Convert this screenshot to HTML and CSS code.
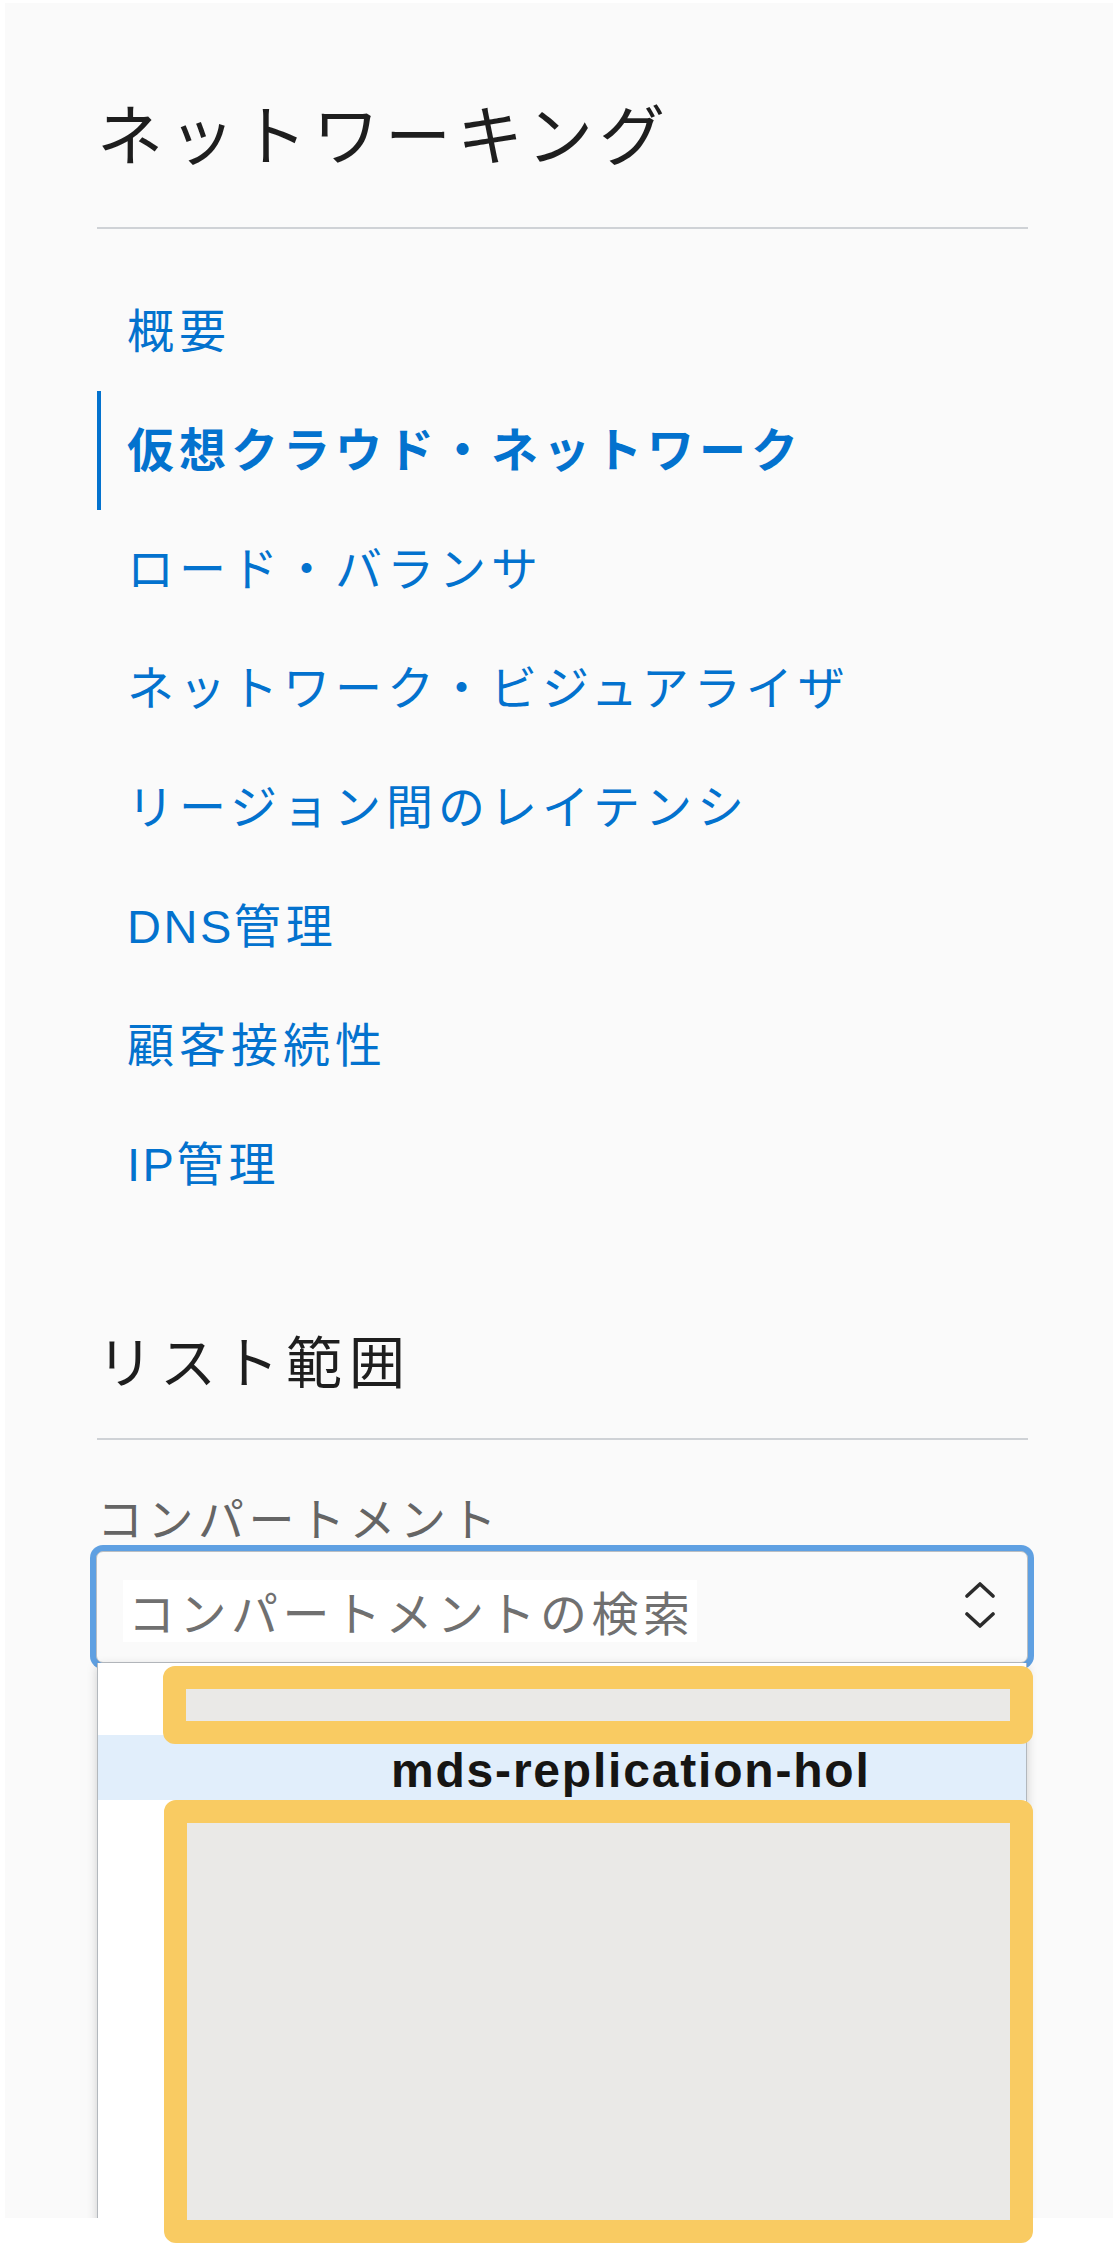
FILE: index.html
```html
<!DOCTYPE html>
<html lang="ja">
<head>
<meta charset="utf-8">
<title>ネットワーキング</title>
<link rel="stylesheet" href="styles.css">
</head>
<body>
<div class="page">
  <div class="panel">
    <h1 class="title">ネットワーキング</h1>
    <hr class="rule rule-title">
    <nav class="nav">
      <a class="nav-item" href="#">概要</a>
      <a class="nav-item active" href="#">仮想クラウド・ネットワーク</a>
      <a class="nav-item" href="#">ロード・バランサ</a>
      <a class="nav-item" href="#">ネットワーク・ビジュアライザ</a>
      <a class="nav-item" href="#">リージョン間のレイテンシ</a>
      <a class="nav-item" href="#"><span class="latin">DNS</span>管理</a>
      <a class="nav-item" href="#">顧客接続性</a>
      <a class="nav-item" href="#"><span class="latin">IP</span>管理</a>
    </nav>
    <h2 class="section-title">リスト範囲</h2>
    <hr class="rule rule-section">
    <label class="field-label">コンパートメント</label>
    <div class="select">
      <span class="placeholder">コンパートメントの検索</span>
      <svg class="chevrons" viewBox="0 0 30 46" width="30" height="46" aria-hidden="true">
        <polyline points="2,14 15,2 28,14" fill="none" stroke="#2b2b2b" stroke-width="3.6" stroke-linecap="round" stroke-linejoin="round"/>
        <polyline points="2,32 15,44 28,32" fill="none" stroke="#2b2b2b" stroke-width="3.6" stroke-linecap="round" stroke-linejoin="round"/>
      </svg>
    </div>
    <ul class="dropdown">
      <li class="option option-first"></li>
      <li class="option option-selected">mds-replication-hol</li>
      <li class="option option-rest"></li>
    </ul>
  </div>
  <div class="redact redact-1"></div>
  <div class="redact redact-2"></div>
</div>
</body>
</html>
```

FILE: styles.css
```css
html, body {
  margin: 0;
  padding: 0;
  background: #ffffff;
}

.page {
  position: relative;
  width: 1113px;
  height: 2245px;
  padding: 3px 0 0 5px;
  box-sizing: border-box;
  overflow: hidden;
  font-family: "Liberation Sans", "Noto Sans CJK JP", sans-serif;
}

.panel {
  height: 2215px;
  background: #fafafa;
  padding: 88px 85px 0 92px;
  box-sizing: border-box;
  overflow: hidden;
}

.title {
  margin: 0;
  font-family: "Noto Sans CJK JP", sans-serif;
  font-size: 66px;
  line-height: 80px;
  font-weight: 400;
  letter-spacing: 6px;
  color: #1e1e1e;
  white-space: nowrap;
}

.rule {
  border: 0;
  height: 2px;
  background: #cfd2d6;
  margin: 0;
}

.rule-title {
  margin-top: 56px;
}

.rule-section {
  margin-top: 44px;
}

.nav {
  display: flex;
  flex-direction: column;
  margin-top: 43px;
}

.nav-item {
  display: block;
  height: 119px;
  line-height: 119px;
  padding-left: 30px;
  font-size: 47px;
  letter-spacing: 5px;
  color: #0372ce;
  text-decoration: none;
  white-space: nowrap;
}

.nav-item .latin {
  letter-spacing: 2.5px;
}

.nav-item.active {
  border-left: 4px solid #0372ce;
  padding-left: 26px;
  font-weight: 700;
}

.section-title {
  margin: 100px 0 0;
  font-family: "Noto Sans CJK JP", sans-serif;
  font-size: 56px;
  line-height: 70px;
  font-weight: 400;
  letter-spacing: 7px;
  color: #1e1e1e;
  white-space: nowrap;
}

.field-label {
  display: block;
  margin-top: 51px;
  font-family: "Noto Sans CJK JP", sans-serif;
  font-size: 46px;
  line-height: 50px;
  letter-spacing: 4.5px;
  color: #656565;
  white-space: nowrap;
}

.select {
  display: flex;
  align-items: center;
  margin: 10px 0 0 -1px;
  width: calc(100% + 1px);
  height: 112px;
  padding: 8px 32px 0 26px;
  box-sizing: border-box;
  border: 1px solid #b9bec3;
  border-radius: 7px;
  background: #fafafa;
  box-shadow: 0 0 0 6px #5fa0e2;
}

.placeholder {
  display: inline-block;
  background: #ffffff;
  line-height: 62px;
  padding: 0 2px 0 5px;
  font-family: "Noto Sans CJK JP", sans-serif;
  font-size: 47px;
  letter-spacing: 4.5px;
  color: #707070;
  white-space: nowrap;
}

.chevrons {
  margin-left: auto;
  margin-top: -13px;
  flex: none;
}

.dropdown {
  list-style: none;
  margin: 0 1px 0 0;
  padding: 0;
  background: #ffffff;
  border-left: 1px solid #b3b8bd;
  border-right: 1px solid #b3b8bd;
  box-shadow: 0 3px 10px rgba(0, 0, 0, 0.18);
}

.option {
  box-sizing: border-box;
}

.option-first {
  height: 72px;
}

.option-selected {
  height: 65px;
  padding: 6px 0 0 293px;
  line-height: 59px;
  background: #e1eefb;
  font-family: "Liberation Sans", Arial, sans-serif;
  font-weight: 700;
  font-size: 48px;
  letter-spacing: 1.8px;
  color: #161513;
  white-space: nowrap;
}

.option-rest {
  height: 520px;
}

.redact {
  position: absolute;
  box-sizing: border-box;
  border: 23px solid #f9cb62;
  border-radius: 12px;
  background: #eae9e7;
}

.redact-1 {
  left: 163px;
  top: 1666px;
  width: 870px;
  height: 78px;
}

.redact-2 {
  left: 164px;
  top: 1800px;
  width: 869px;
  height: 443px;
}
```
